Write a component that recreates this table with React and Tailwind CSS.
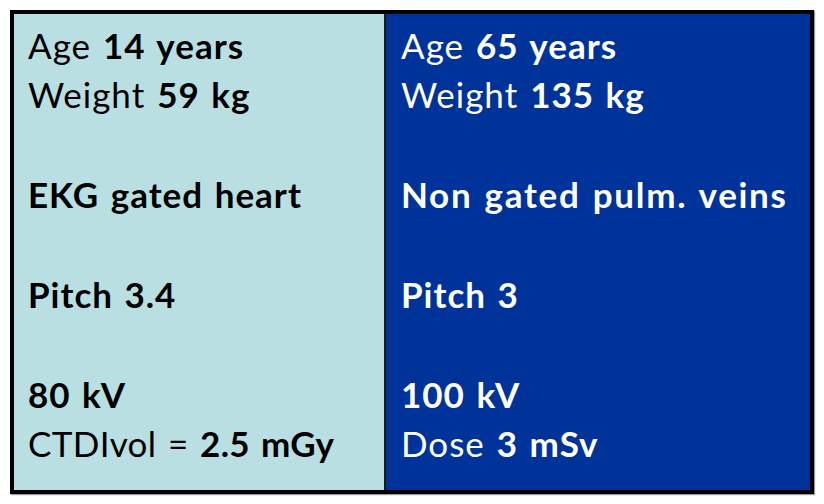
export default function App() {
  const font = { fontFamily: "Lato, 'Open Sans', sans-serif" };
  const Line = ({ children, track = "tracking-[1px]" }) => (
    <div className={`h-[49px] leading-[49px] whitespace-nowrap [word-spacing:2px] ${track}`}>{children}</div>
  );
  return (
    <div className="w-[824px] h-[504px] bg-white pt-[10px] pl-[10px]" style={font}>
      <div className="w-[804px] h-[484px] border-4 border-black flex shadow-[1px_1px_1px_rgba(0,0,0,0.4)]">
        <div className="w-[372px] h-full bg-[#b9dfe2] text-black text-[35px] pl-[14px] pt-[7px] border-r-2 border-[#1a1a1a] flex flex-col gap-[51px]">
          <div>
            <Line>Age <b>14 years</b></Line>
            <Line>Weight <b>59 kg</b></Line>
          </div>
          <Line><b>EKG gated heart</b></Line>
          <Line><b>Pitch 3.4</b></Line>
          <div>
            <Line><b>80 kV</b></Line>
            <Line track="tracking-[0.4px]">CTDIvol = <b>2.5 mGy</b></Line>
          </div>
        </div>
        <div className="flex-1 h-full bg-[#003399] text-white text-[35px] pl-[15px] pt-[7px] flex flex-col gap-[51px]">
          <div>
            <Line>Age <b>65 years</b></Line>
            <Line>Weight <b>135 kg</b></Line>
          </div>
          <Line track="tracking-[1.7px]"><b>Non gated pulm. veins</b></Line>
          <Line><b>Pitch 3</b></Line>
          <div>
            <Line><b>100 kV</b></Line>
            <Line>Dose <b>3 mSv</b></Line>
          </div>
        </div>
      </div>
    </div>
  );
}
